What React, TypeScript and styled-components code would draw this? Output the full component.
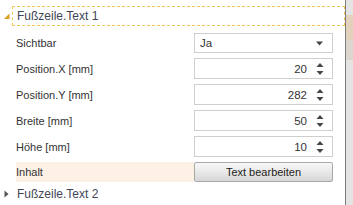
import React from "react";
import styled, { createGlobalStyle } from "styled-components";

const Global = createGlobalStyle`
  html, body { margin: 0; padding: 0; background: #ffffff; }
  body { width: 353px; height: 205px; overflow: hidden; }
`;

const Frame = styled.div`
  display: flex;
  width: 353px;
  height: 205px;
  background: #ffffff;
`;

const Panel = styled.div`
  width: 345px;
  display: flex;
  flex-direction: column;
  padding-top: 6px;
  box-sizing: border-box;
`;

const Divider = styled.div`
  width: 1px;
  background: #7c7c7c;
`;

const SideStrip = styled.div`
  flex: 1;
  display: flex;
  flex-direction: column;
  background: #e4e4e4;
  padding-top: 15px;
`;

const SideBlock = styled.div<{ $h: number; $c: string }>`
  height: ${(p) => p.$h}px;
  background: ${(p) => p.$c};
`;

const GroupHeader = styled.div`
  display: flex;
  align-items: center;
  height: 20px;
`;

const ArrowCell = styled.div`
  width: 12px;
  height: 20px;
  display: flex;
  align-items: center;
  justify-content: center;
`;

const HeaderBox = styled.div<{ $focused?: boolean }>`
  flex: 1;
  height: 20px;
  box-sizing: border-box;
  border: 1px dashed ${(p) => (p.$focused ? "#f2c75c" : "transparent")};
  display: flex;
  align-items: center;
  padding-left: 4px;
  font-family: "Liberation Sans", Arial, sans-serif;
  font-size: 12px;
  color: #3e4656;
`;

const Rows = styled.div`
  display: flex;
  flex-direction: column;
  gap: 5px;
  margin: 7px 12px 2px 16px;
`;

const Row = styled.div`
  display: grid;
  grid-template-columns: 178px 139px;
  align-items: stretch;
`;

const Label = styled.div<{ $active?: boolean }>`
  display: flex;
  align-items: center;
  font-family: "Liberation Sans", Arial, sans-serif;
  font-size: 11px;
  color: #333333;
  background: ${(p) => (p.$active ? "#fdf1e6" : "transparent")};
`;

const Field = styled.div<{ $h?: number }>`
  height: ${(p) => p.$h ?? 21}px;
  box-sizing: border-box;
  border: 1px solid #cfcfcf;
  background: #ffffff;
  display: flex;
  align-items: center;
  font-family: "Liberation Sans", Arial, sans-serif;
  font-size: 11.5px;
  color: #333333;
`;

const SelectValue = styled.span`
  flex: 1;
  padding-left: 5px;
`;

const NumValue = styled.span`
  flex: 1;
  text-align: right;
  padding-right: 6px;
`;

const IconSlot = styled.div`
  width: 14px;
  margin-right: 5px;
  display: flex;
  align-items: center;
  justify-content: center;
`;

const Button = styled.button`
  height: 20px;
  box-sizing: border-box;
  border: 1px solid #a9a9a9;
  border-radius: 2px;
  background: linear-gradient(#f7f7f7, #e9e9e9 50%, #d6d6d6);
  font-family: "Liberation Sans", Arial, sans-serif;
  font-size: 11px;
  color: #222222;
  padding: 0;
`;

const DropArrow = () => (
  <svg width="8" height="5" viewBox="0 0 8 5">
    <path d="M0 0.5 L7 0.5 L3.5 4.5 Z" fill="#444" />
  </svg>
);

const Spinner = () => (
  <svg width="8" height="14" viewBox="0 0 8 14">
    <path d="M0.5 5 L4 1 L7.5 5 Z" fill="#444" />
    <path d="M0.5 9 L7.5 9 L4 13 Z" fill="#444" />
  </svg>
);

const ExpandedArrow = () => (
  <svg width="7" height="7" viewBox="0 0 7 7">
    <path d="M6.5 0.5 L6.5 6 L1 6 Z" fill="#d9a01c" />
  </svg>
);

const CollapsedArrow = () => (
  <svg width="5" height="8" viewBox="0 0 5 8">
    <path d="M0.5 0.5 L4.5 4 L0.5 7.5 Z" fill="#555" />
  </svg>
);

const numeric = [
  { label: "Position.X [mm]", value: "20" },
  { label: "Position.Y [mm]", value: "282" },
  { label: "Breite [mm]", value: "50" },
  { label: "Höhe [mm]", value: "10" },
];

export default function App() {
  return (
    <>
      <Global />
      <Frame>
        <Panel>
          <GroupHeader>
            <ArrowCell>
              <ExpandedArrow />
            </ArrowCell>
            <HeaderBox $focused>Fußzeile.Text 1</HeaderBox>
          </GroupHeader>
          <Rows>
            <Row>
              <Label>Sichtbar</Label>
              <Field $h={20}>
                <SelectValue>Ja</SelectValue>
                <IconSlot>
                  <DropArrow />
                </IconSlot>
              </Field>
            </Row>
            {numeric.map((r) => (
              <Row key={r.label}>
                <Label>{r.label}</Label>
                <Field>
                  <NumValue>{r.value}</NumValue>
                  <IconSlot>
                    <Spinner />
                  </IconSlot>
                </Field>
              </Row>
            ))}
            <Row>
              <Label $active>Inhalt</Label>
              <Button>Text bearbeiten</Button>
            </Row>
          </Rows>
          <GroupHeader>
            <ArrowCell>
              <CollapsedArrow />
            </ArrowCell>
            <HeaderBox>Fußzeile.Text 2</HeaderBox>
          </GroupHeader>
        </Panel>
        <Divider />
        <SideStrip>
          <SideBlock $h={25} $c="#e2d2bc" />
          <SideBlock $h={20} $c="#ddd6ce" />
        </SideStrip>
      </Frame>
    </>
  );
}
